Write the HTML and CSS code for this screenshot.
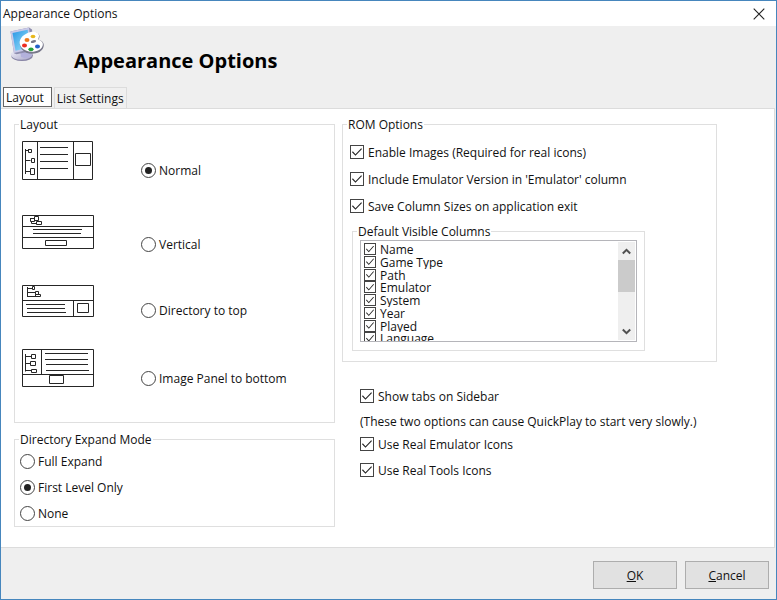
FILE: index.html
```html
<!DOCTYPE html>
<html lang="en">
<head>
<meta charset="utf-8">
<title>Appearance Options</title>
<link rel="stylesheet" href="styles.css">
</head>
<body>
<main class="window">
  <div class="titlebar">
    <span>Appearance Options</span>
    <button class="close" type="button" aria-label="Close">
      <svg width="12" height="12" viewBox="0 0 12 12"><path d="M.7.7l10.6 10.6M11.3.7L.7 11.3" fill="none" stroke="#222" stroke-width="1.1"/></svg>
    </button>
  </div>

  <header class="header">
    <svg class="logo" width="36" height="36" viewBox="0 0 36 36" aria-hidden="true">
      <defs>
        <linearGradient id="screen" x1="0" y1="0" x2="1" y2="1"><stop offset="0" stop-color="#2795e4"/><stop offset="1" stop-color="#a5e8fc"/></linearGradient>
        <linearGradient id="base" x1="0" y1="0" x2="1" y2="1"><stop offset="0" stop-color="#f6f6fd"/><stop offset="1" stop-color="#a9a6c9"/></linearGradient>
      </defs>
      <ellipse cx="13" cy="28.500" rx="11" ry="5.500" fill="#8784a5"/>
      <ellipse cx="12.500" cy="27.500" rx="10.800" ry="5.200" fill="url(#base)"/>
      <path d="M11 23l10-2 2 7q-4 5-11 2z" fill="#b3b1dc"/>
      <path d="M1.500 4.500L20 .6l3 1.800 2 21-17.500 3.800-2.500-1z" fill="#8d8cae"/>
      <path d="M1.500 4.500L20 .6l2.500 21.500L5 26z" fill="#c8c9e8"/>
      <path d="M3.500 6L18.700 2.800l2 17.800L6.500 23.800z" fill="url(#screen)"/>
      <path d="M13 22.500c-4.500-5.500-1.500-12 4.500-15 6.500-3.500 12.500-2.500 13 1.500 0 3-2 3.500 1 4.500 5 2 4 8.500-1 11.500-6 3-14 2-17.500-2.500z" fill="#77778a"/>
      <path d="M12.500 20.500c-4-5-1-11 4.700-13.700 6-3.300 12.500-2.300 12.800 1.400.2 3-2 4 .8 5 4.700 2 3.700 7.200-.8 9.700-6 3.300-13.900 1.800-17.500-2.400z" fill="#fff"/>
      <ellipse cx="24.500" cy="14.500" rx="2.700" ry="1.400" fill="#77778a" transform="rotate(-15 24.500 14.500)"/>
      <ellipse cx="18" cy="13" rx="2.500" ry="2" fill="#ee7a1c"/>
      <ellipse cx="24" cy="9.500" rx="2.400" ry="1.800" fill="#e8b81c"/>
      <ellipse cx="15.500" cy="18.500" rx="2.500" ry="2" fill="#ed2b20"/>
      <ellipse cx="22" cy="22.300" rx="2.600" ry="1.900" fill="#26a03a"/>
      <ellipse cx="28.500" cy="19.500" rx="2.500" ry="1.900" fill="#2460c9"/>
    </svg>
    <h1>Appearance Options</h1>
  </header>

  <nav class="tabs" role="tablist">
    <button class="tab active" role="tab" aria-selected="true" type="button">Layout</button>
    <button class="tab" role="tab" aria-selected="false" type="button">List Settings</button>
  </nav>

  <section class="panel">
    <div class="column">
      <fieldset class="group layout-group">
        <legend>Layout</legend>
        <div class="thumbs">
          <svg width="72" height="39" viewBox="0 0 72 39"><path d="M.5.5h70v38H.5zM15.500.5v38M51.500.5v38M18 6.500h28M18 13.500h28M18 20.500h28M18 27.500h28M53.500 12.500h15v12h-15zM3.500 8v25M3.500 9.500h3M3.500 19.500h5M3.500 30.500h5M9.500 17.500h3v4h-3zM8.500 27.500h4v6h-4zM6.500 8v3.500h3v-3h-3"/></svg>
          <svg width="72" height="35" viewBox="0 0 72 35"><path d="M.5.5h71v33H.5zM.5 11.500h71M.5 22.500h71M11 14.500h49M11 18.500h48M23.500 25.500h21v5h-21zM8.500 3v3.500h4v-3M12.500 1.500h4v4h-4zM9.500 6.500v2h5M14.500 6.500h5v3h-5zM8.500 3.500h4"/></svg>
          <svg width="72" height="32" viewBox="0 0 72 32"><path d="M.5.5h71v31H.5zM.5 15.500h71M51.500 15.500v16M4 19.500h39M5 23.500h38M5 27.500h39M55.500 18.500h11v9h-11zM5.500 2v10M5.500 3.500h5M5.500 7.500h8M5.500 11.500h9M10.500 1.500h2v3h-2zM13.500 6.500h3v3h-3zM13.500 9.500h5v2h-5z"/></svg>
          <svg width="72" height="38" viewBox="0 0 72 38"><path d="M.5.5h71v37H.5zM19.500.5v25M.5 25.500h71M23 4.500h43M23 10.500h43M24 15.500h42M24 21.500h43M27.500 26.500h14v8h-14zM3.500 5v17.500M3.500 7.500h6M3.500 14.500h5M3.500 21.500h6M9.500 5.500h4v4h-4zM8.500 12.500h5v4h-5zM9.500 20.500h5v3h-5z"/></svg>
        </div>
        <div class="modes">
          <label class="option"><input type="radio" name="layout" checked><span>Normal</span></label>
          <label class="option"><input type="radio" name="layout"><span>Vertical</span></label>
          <label class="option"><input type="radio" name="layout"><span>Directory to top</span></label>
          <label class="option"><input type="radio" name="layout"><span>Image Panel to bottom</span></label>
        </div>
      </fieldset>

      <fieldset class="group expand-group">
        <legend>Directory Expand Mode</legend>
        <label class="option"><input type="radio" name="expand"><span>Full Expand</span></label>
        <label class="option"><input type="radio" name="expand" checked><span>First Level Only</span></label>
        <label class="option"><input type="radio" name="expand"><span>None</span></label>
      </fieldset>
    </div>

    <div class="column">
      <fieldset class="group rom-group">
        <legend>ROM Options</legend>
        <div class="rom-options">
          <label class="option"><input type="checkbox" checked><span>Enable Images (Required for real icons)</span></label>
          <label class="option"><input type="checkbox" checked><span>Include Emulator Version in 'Emulator' column</span></label>
          <label class="option"><input type="checkbox" checked><span>Save Column Sizes on application exit</span></label>
        </div>
        <fieldset class="group columns-group">
          <legend>Default Visible Columns</legend>
          <div class="listbox">
            <div class="items">
              <label class="item"><input type="checkbox" checked><span>Name</span></label>
              <label class="item"><input type="checkbox" checked><span>Game Type</span></label>
              <label class="item"><input type="checkbox" checked><span>Path</span></label>
              <label class="item"><input type="checkbox" checked><span>Emulator</span></label>
              <label class="item"><input type="checkbox" checked><span>System</span></label>
              <label class="item"><input type="checkbox" checked><span>Year</span></label>
              <label class="item"><input type="checkbox" checked><span>Played</span></label>
              <label class="item"><input type="checkbox" checked><span>Language</span></label>
            </div>
            <div class="scrollbar">
              <button type="button" aria-label="Scroll up"><svg width="9" height="7" viewBox="0 0 9 7"><path d="M.8 5.500L4.500 1.800 8.200 5.500" fill="none" stroke="#505050" stroke-width="2"/></svg></button>
              <div class="thumb"></div>
              <button type="button" aria-label="Scroll down"><svg width="9" height="7" viewBox="0 0 9 7"><path d="M.8 1.500L4.500 5.200 8.200 1.500" fill="none" stroke="#505050" stroke-width="2"/></svg></button>
            </div>
          </div>
        </fieldset>
      </fieldset>

      <div class="extras">
        <label class="option"><input type="checkbox" checked><span>Show tabs on Sidebar</span></label>
        <p>(These two options can cause QuickPlay to start very slowly.)</p>
        <label class="option"><input type="checkbox" checked><span>Use Real Emulator Icons</span></label>
        <label class="option"><input type="checkbox" checked><span>Use Real Tools Icons</span></label>
      </div>
    </div>
  </section>

  <footer class="footer">
    <button class="action" type="button"><u>O</u>K</button>
    <button class="action" type="button"><u>C</u>ancel</button>
  </footer>
</main>
</body>
</html>
```

FILE: styles.css
```css
* { box-sizing: border-box; }

body {
  margin: 0;
  font: 12px/20px "Open Sans", "Noto Sans", sans-serif;
  color: #111;
}

button { font: inherit; color: inherit; padding: 0; }

.window {
  display: flex;
  flex-direction: column;
  min-height: 100vh;
  border: 1px solid #4686bd;
  background: #efefef;
}

.titlebar {
  display: flex;
  justify-content: space-between;
  align-items: center;
  height: 25px;
  padding: 0 11px 0 2px;
  background: #fff;
}

.close {
  display: flex;
  border: 0;
  background: none;
}

.header {
  display: flex;
  height: 61px;
  padding: 1px 8px;
}

.logo { flex: none; }

h1 {
  margin: 20px 0 0 29px;
  font-size: 20px;
  line-height: 28px;
  font-weight: 700;
  color: #000;
}

.tabs {
  display: flex;
  align-items: flex-end;
  gap: 2px;
  padding-left: 2px;
}

.tab {
  height: 21px;
  padding: 1px 2px 0;
  border: 1px solid #dcdcdc;
  border-bottom: 0;
  background: #f0f0f0;
  line-height: 20px;
}

.tab.active {
  height: 20px;
  margin-bottom: 1px;
  padding: 1px 7px 0 2px;
  border: 1px solid #666;
  background: #fff;
  line-height: 18px;
}

.panel {
  flex: 1;
  display: grid;
  grid-template-columns: 321fr 375fr;
  align-items: start;
  gap: 7px;
  margin-right: 1px;
  padding: 6px 57px 20px 13px;
  border: solid #dcdcdc;
  border-width: 1px 1px 1px 0;
  background: #fff;
}

.column { min-width: 0; }

.group {
  --inset: 7px;
  min-width: 0;
  margin: 0;
  padding: 0 var(--inset);
  border: 1px solid #dfdfdf;
}

legend {
  margin-left: calc(4px - var(--inset));
  padding: 2px 1px 0;
  line-height: 16px;
}

.option {
  display: flex;
  align-items: center;
  gap: 4px;
  height: 20px;
}

.option span { padding-top: 2px; }

.option:has([type="radio"]) { gap: 3px; }

input {
  appearance: none;
  flex: none;
  display: grid;
  place-items: center;
  width: 14px;
  height: 14px;
  margin: 0;
  border: 1px solid #444;
  background: #fff;
}

input[type="radio"] {
  width: 15px;
  height: 15px;
  border-radius: 50%;
}

input[type="radio"]:checked::before {
  content: "";
  width: 7px;
  height: 7px;
  border-radius: 50%;
  background: #222;
}

input[type="checkbox"]:checked::before {
  content: "";
  width: 10px;
  height: 8px;
  background: #222;
  clip-path: polygon(0 52%, 8% 42%, 35% 78%, 92% 4%, 100% 12%, 35% 98%);
}

.layout-group {
  display: flex;
  height: 308px;
  padding-top: 8px;
}

.thumbs {
  display: grid;
  grid-template-rows: 74px 70px 64px 38px;
  align-content: start;
}

.thumbs path {
  fill: none;
  stroke: #262626;
}

.modes {
  display: grid;
  grid-template-rows: 74px 66px 68px 20px;
  align-content: start;
  margin: 19px 0 0 47px;
}

.expand-group {
  --inset: 5px;
  display: flex;
  flex-direction: column;
  gap: 6px;
  margin-top: 7px;
  padding-top: 3px;
  padding-bottom: 3px;
}

.rom-group {
  padding-top: 9px;
  padding-bottom: 10px;
}

.rom-options {
  display: grid;
  gap: 7px;
}

.columns-group {
  margin: 6px 64px 0 2px;
  padding-bottom: 8px;
}

.listbox {
  display: flex;
  height: 102px;
  border: 1px solid #b5b5ba;
  overflow: hidden;
}

.items {
  flex: 1;
  display: grid;
  grid-auto-rows: 1fr;
  height: 104px;
  padding: 2px 3px 0;
}

.item {
  display: flex;
  gap: 4px;
  min-height: 0;
  line-height: 14px;
  overflow: hidden;
}

.item input {
  width: 12px;
  height: 12px;
}

.item input:checked::before {
  width: 8px;
  height: 7px;
}

.scrollbar {
  display: flex;
  flex-direction: column;
  width: 17px;
  margin: 1px;
  background: #efefef;
}

.scrollbar button {
  display: grid;
  place-items: center;
  height: 18px;
  border: 0;
  background: none;
}

.thumb {
  height: 32px;
  margin-bottom: auto;
  background: #cbcbcb;
}

.extras {
  display: grid;
  grid-template-rows: 25px 23px 26px 20px;
  padding: 24px 0 0 18px;
}

.extras p { margin: 0; padding-top: 1px; }

.footer {
  display: flex;
  justify-content: flex-end;
  gap: 8px;
  padding: 13px 7px 10px;
}

.action {
  width: 84px;
  height: 28px;
  padding-top: 2px;
  border: 1px solid #adadad;
  background: #e1e1e1;
}
```
